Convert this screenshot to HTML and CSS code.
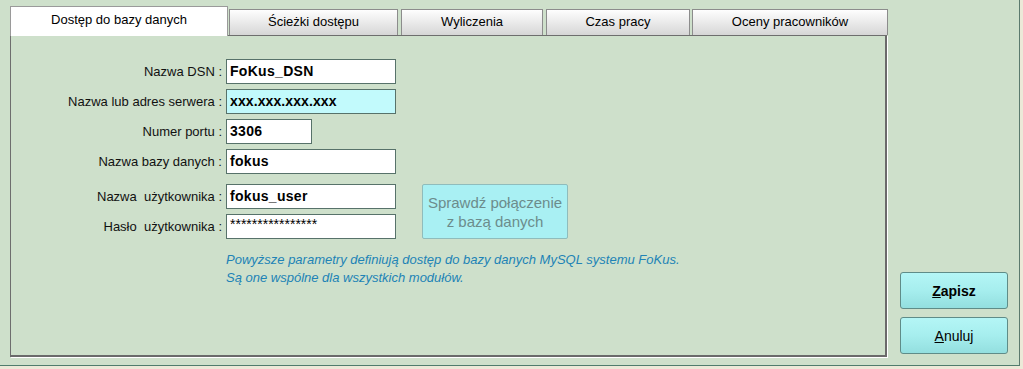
FILE: index.html
```html
<!DOCTYPE html>
<html lang="pl">
<head>
<meta charset="utf-8">
<title>Konfiguracja</title>
<link rel="stylesheet" href="styles.css">
</head>
<body>
<div class="window">
  <div class="main">
    <div class="tabs">
      <div class="tab active t1">Dostęp do bazy danych</div>
      <div class="tab t2">Ścieżki dostępu</div>
      <div class="tab t3">Wyliczenia</div>
      <div class="tab t4">Czas pracy</div>
      <div class="tab t5">Oceny pracowników</div>
    </div>
    <div class="panel">
      <div class="form">
        <label class="lbl">Nazwa DSN :</label>
        <div class="field">FoKus_DSN</div>

        <label class="lbl">Nazwa lub adres serwera :</label>
        <div class="field focus">xxx.xxx.xxx.xxx</div>

        <label class="lbl">Numer portu :</label>
        <div class="field short">3306</div>

        <label class="lbl">Nazwa bazy danych :</label>
        <div class="field">fokus</div>

        <label class="lbl low">Nazwa&nbsp; użytkownika :</label>
        <div class="field low">fokus_user</div>

        <label class="lbl">Hasło&nbsp; użytkownika :</label>
        <div class="field pass">****************</div>

        <button class="test" type="button" disabled>Sprawdź połączenie<br>z bazą danych</button>

        <p class="note">Powyższe parametry definiują dostęp do bazy danych MySQL systemu FoKus.<br>Są one wspólne dla wszystkich modułów.</p>
      </div>
    </div>
  </div>
  <div class="actions">
    <button class="btn save" type="button"><u>Z</u>apisz</button>
    <button class="btn cancel" type="button"><u>A</u>nuluj</button>
  </div>
</div>
</body>
</html>
```
FILE: styles.css
```css
html, body {
  margin: 0;
  padding: 0;
}
body {
  background: #ece9d8;
  font-family: "Liberation Sans", Arial, sans-serif;
  font-size: 13px;
  color: #000;
}
.window {
  width: 1019px;
  height: 365px;
  background: #cee0cb;
  border-right: 1px solid #5b7a6e;
  border-bottom: 1px solid #4f7d6d;
  display: flex;
}
.main {
  width: 877px;
  padding: 6px 0 0 10px;
}
.tabs {
  display: flex;
  align-items: flex-end;
  height: 30px;
  margin-bottom: -1px;
}
.tab {
  box-sizing: border-box;
  height: 26px;
  margin-bottom: 1px;
  border: 1px solid #8c8c8c;
  border-bottom: none;
  background: linear-gradient(#fefefe, #f2f2f2 30%, #d6d6d6);
  text-align: center;
  line-height: 24px;
  font-size: 13px;
  flex: none;
}
.tab.active {
  position: relative;
  z-index: 1;
  height: 30px;
  margin-bottom: 0;
  background: #fff;
  border-color: #9a9a9a;
  line-height: 26px;
}
.t1 { width: 218px; }
.t2 { width: 169px; margin-left: 1px; }
.t3 { width: 142px; margin-left: 3px; }
.t4 { width: 144px; margin-left: 3px; }
.t5 { width: 196px; margin-left: 2px; }
.panel {
  box-sizing: border-box;
  height: 322px;
  width: 877px;
  border-top: 1px solid #6e6e6e;
  border-left: 1px solid #6e6e6e;
  border-right: 2px solid #6a6a6a;
  border-bottom: 2px solid #6a6a6a;
  box-shadow: 1px 1px 0 #ffffff;
}
.form {
  display: grid;
  grid-template-columns: 211px 170px auto;
  grid-template-rows: 25px 25px 25px 25px 30px 25px auto;
  column-gap: 4px;
  row-gap: 5px;
  padding-top: 23px;
  align-items: center;
}
.lbl {
  grid-column: 1;
  text-align: right;
  font-size: 13px;
  color: #111;
}
.low {
  align-self: end;
}
.lbl.low {
  line-height: 25px;
}
.field {
  grid-column: 2;
  box-sizing: border-box;
  height: 25px;
  background: #fff;
  border: 1px solid #57726a;
  padding: 0 3px;
  font-weight: bold;
  font-size: 14px;
  letter-spacing: 0.3px;
  line-height: 23px;
  white-space: nowrap;
}
.field.focus { background: #c2fafc; letter-spacing: 0.1px; }
.field.short { width: 86px; }
.field.pass {
  font-weight: normal;
  letter-spacing: 0;
  line-height: 18px;
  font-size: 14px;
}
.test {
  grid-column: 3;
  grid-row: 5 / span 2;
  margin: 5px 0 0 22px;
  width: 146px;
  height: 55px;
  align-self: start;
  background: #a9f0f3;
  border: 1px solid #8fbcbc;
  border-radius: 2px;
  color: #6c8c8c;
  font-family: "Liberation Sans", Arial, sans-serif;
  font-size: 15px;
  line-height: 19px;
  padding: 0;
}
.note {
  grid-column: 2 / span 2;
  grid-row: 7;
  margin: 7px 0 0 0;
  align-self: start;
  font-style: italic;
  color: #2183b6;
  font-size: 13px;
  line-height: 18px;
  white-space: nowrap;
}
.actions {
  margin-left: 13px;
  width: 108px;
  display: flex;
  flex-direction: column;
  justify-content: flex-end;
  gap: 8px;
  padding-bottom: 11px;
}
.btn {
  height: 37px;
  width: 108px;
  border: 1px solid #5f8c88;
  border-radius: 3px;
  background: linear-gradient(#b4f6f6, #a6eeee 50%, #93dfdf);
  font-family: "Liberation Sans", Arial, sans-serif;
  font-size: 14px;
  color: #000;
  padding: 0;
}
.btn.save { font-weight: bold; }
```
